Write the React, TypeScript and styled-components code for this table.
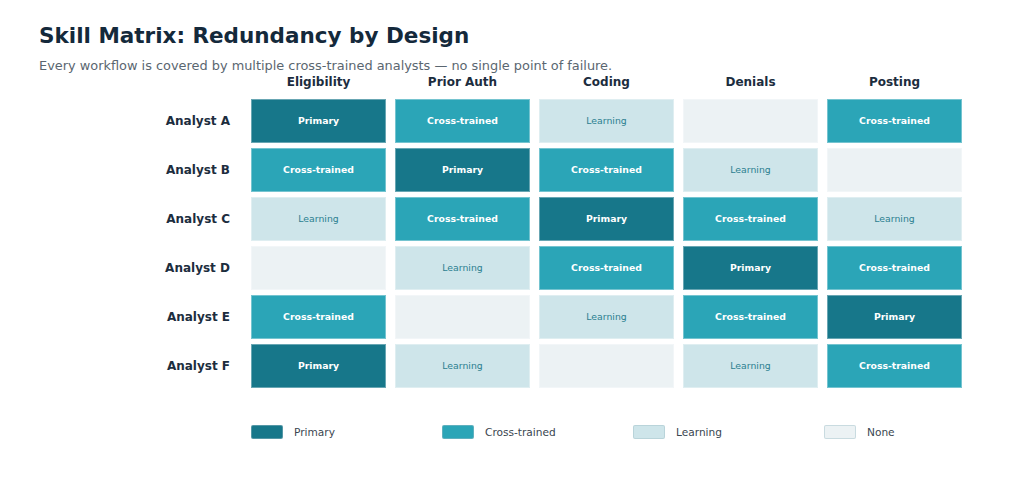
import React from "react";
import styled, { createGlobalStyle } from "styled-components";

type Level = "P" | "C" | "L" | "N";

const GlobalStyle = createGlobalStyle`
  html, body { margin: 0; padding: 0; background: #ffffff; }
  body { font-family: "DejaVu Sans", "Liberation Sans", sans-serif; }
`;

const FILL: Record<Level, string> = {
  P: "#17778a",
  C: "#2ba5b7",
  L: "#cee5ea",
  N: "#ecf2f4",
};

const LABEL: Record<Level, string> = {
  P: "Primary",
  C: "Cross-trained",
  L: "Learning",
  N: "",
};

const Page = styled.div`
  width: 1024px;
  height: 491px;
  box-sizing: border-box;
  padding: 23px 0 0 39px;
  background: #ffffff;
  overflow: hidden;
`;

const Title = styled.h1`
  margin: 0;
  font-size: 21.5px;
  line-height: 26px;
  font-weight: 700;
  color: #14293b;
`;

const Subtitle = styled.p`
  margin: 9px 0 0;
  font-size: 12.9px;
  line-height: 16px;
  color: #5a6670;
`;

const Matrix = styled.div`
  display: grid;
  grid-template-columns: 203px repeat(5, 135px);
  grid-template-rows: 20px repeat(6, 44px);
  column-gap: 9px;
  row-gap: 5px;
`;

const HeaderCell = styled.div`
  padding-bottom: 4px;
  box-sizing: border-box;
  font-size: 12px;
  line-height: 16px;
  font-weight: 700;
  color: #1c2d3e;
  text-align: center;
`;

const RowLabel = styled.div`
  display: flex;
  align-items: center;
  justify-content: flex-end;
  padding-right: 12px;
  font-size: 12px;
  font-weight: 700;
  color: #1c2d3e;
`;

const Cell = styled.div<{ $level: Level }>`
  display: flex;
  align-items: center;
  justify-content: center;
  box-sizing: border-box;
  padding-bottom: 2px;
  background: ${(p) => FILL[p.$level]};
  box-shadow: inset 0 0 0 1px rgba(255, 255, 255, 0.35);
  font-size: 9.3px;
  font-weight: ${(p) => (p.$level === "L" ? 400 : 700)};
  color: ${(p) => (p.$level === "L" ? "#2c7f90" : "#ffffff")};
`;

const Legend = styled.div`
  display: grid;
  grid-template-columns: repeat(4, 191px);
  margin: 37px 0 0 212px;
`;

const LegendItem = styled.div`
  display: flex;
  align-items: center;
  gap: 11px;
  font-size: 10.6px;
  color: #3a4650;
  height: 14px;
`;

const Swatch = styled.span<{ $level: Level }>`
  width: 32px;
  height: 14px;
  box-sizing: border-box;
  border-radius: 2px;
  background: ${(p) => FILL[p.$level]};
  border: 1px solid rgba(160, 190, 200, 0.45);
`;

const columns = ["Eligibility", "Prior Auth", "Coding", "Denials", "Posting"];

const rows: { name: string; levels: Level[] }[] = [
  { name: "Analyst A", levels: ["P", "C", "L", "N", "C"] },
  { name: "Analyst B", levels: ["C", "P", "C", "L", "N"] },
  { name: "Analyst C", levels: ["L", "C", "P", "C", "L"] },
  { name: "Analyst D", levels: ["N", "L", "C", "P", "C"] },
  { name: "Analyst E", levels: ["C", "N", "L", "C", "P"] },
  { name: "Analyst F", levels: ["P", "L", "N", "L", "C"] },
];

const legend: { level: Level; text: string }[] = [
  { level: "P", text: "Primary" },
  { level: "C", text: "Cross-trained" },
  { level: "L", text: "Learning" },
  { level: "N", text: "None" },
];

export default function App() {
  return (
    <>
      <GlobalStyle />
      <Page>
        <Title>Skill Matrix: Redundancy by Design</Title>
        <Subtitle>
          Every workflow is covered by multiple cross-trained analysts — no single point of failure.
        </Subtitle>
        <Matrix>
          <div />
          {columns.map((c) => (
            <HeaderCell key={c}>{c}</HeaderCell>
          ))}
          {rows.map((r) => (
            <React.Fragment key={r.name}>
              <RowLabel>{r.name}</RowLabel>
              {r.levels.map((lv, i) => (
                <Cell key={i} $level={lv}>
                  {LABEL[lv]}
                </Cell>
              ))}
            </React.Fragment>
          ))}
        </Matrix>
        <Legend>
          {legend.map((l) => (
            <LegendItem key={l.level}>
              <Swatch $level={l.level} />
              {l.text}
            </LegendItem>
          ))}
        </Legend>
      </Page>
    </>
  );
}
